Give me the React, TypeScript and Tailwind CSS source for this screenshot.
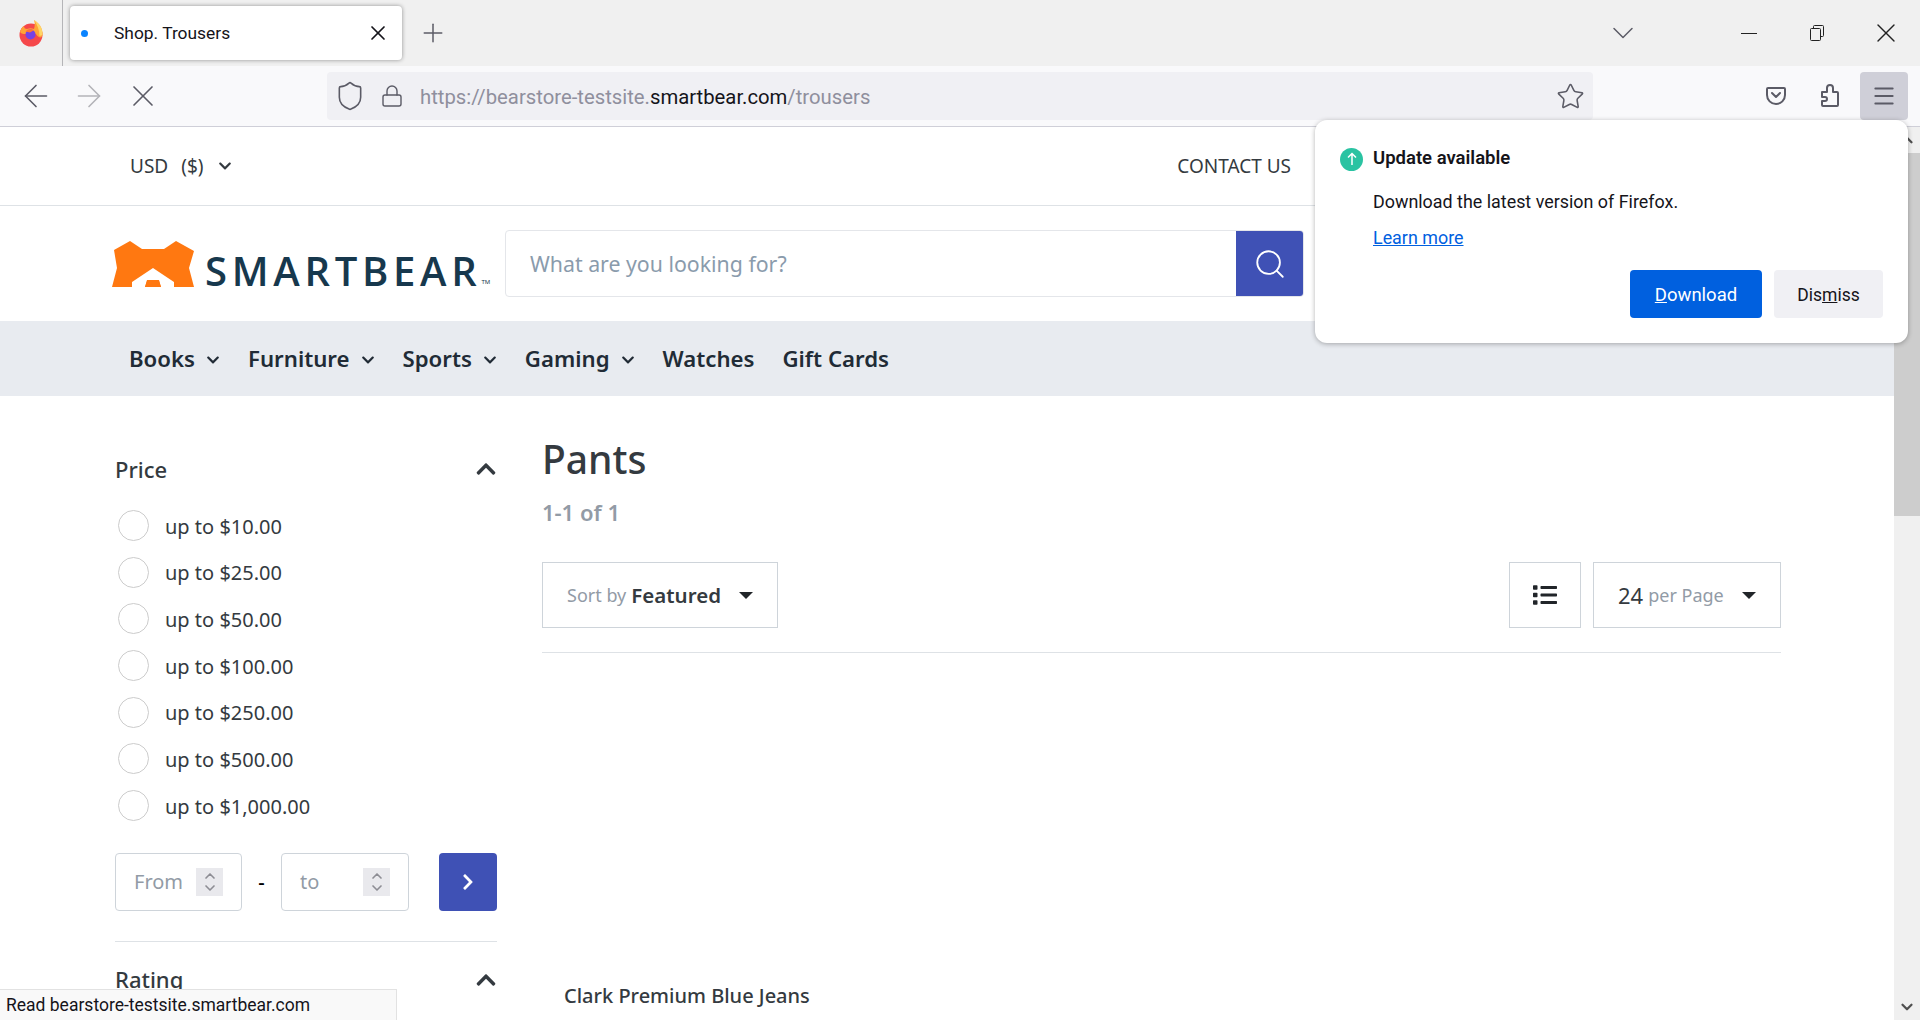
import { ChevronDown, ChevronUp, Search, X, Plus, ArrowLeft, ArrowRight, Shield, Lock, Star, Menu } from 'lucide-react'
import { FaChevronDown, FaChevronUp, FaChevronRight, FaList } from 'react-icons/fa'

const font = "font-['Noto_Sans','Open_Sans',sans-serif]"

const prices = ['up to $10.00', 'up to $25.00', 'up to $50.00', 'up to $100.00', 'up to $250.00', 'up to $500.00', 'up to $1,000.00']
const navItems = [
  { label: 'Books', caret: true },
  { label: 'Furniture', caret: true },
  { label: 'Sports', caret: true },
  { label: 'Gaming', caret: true },
  { label: 'Watches', caret: false },
  { label: 'Gift Cards', caret: false },
]

const FirefoxLogo = () => (
  <svg width="24" height="28" viewBox="0 0 24 28">
    <circle cx="12" cy="16" r="11.5" fill="#f5484b" />
    <path d="M1 13c1-3 2-5 4-6 0 2 1 3 3 3 2-1 5-1 7 0 1-3 1-6 0-9 5 3 9 8 8.500 15-.5 3-3 3-5 1-2-4-8-5-12-2-2 0-4 0-5.500-2z" fill="#ffa436" />
    <path d="M15 1c5 3 9 8 8.500 15l-3 1c0-6-2-11-5.500-16z" fill="#ffd567" />
    <circle cx="11.500" cy="15.500" r="5" fill="#7542e5" />
    <path d="M6.500 12.500c2-2.500 6-3 8-1l-3.500 2z" fill="#ff7139" />
  </svg>
)

const Pocket = () => (
  <svg width="22" height="22" viewBox="0 0 22 22" fill="none" stroke="#5b5b66" strokeWidth="2" strokeLinecap="round" strokeLinejoin="round">
    <path d="M3 3h16a1 1 0 0 1 1 1v6a9 9 0 0 1-18 0V4a1 1 0 0 1 1-1z" />
    <path d="M7 8l4 4 4-4" />
  </svg>
)

const Puzzle = () => (
  <svg width="20" height="24" viewBox="0 0 20 24" fill="none" stroke="#5b5b66" strokeWidth="2" strokeLinejoin="round">
    <path d="M2 8h5V4a3 3 0 0 1 6 0v4h4a1 1 0 0 1 1 1v12a1 1 0 0 1-1 1H3a1 1 0 0 1-1-1v-4h3a2 2 0 0 0 0-4H2z" />
  </svg>
)

const RestoreIcon = () => (
  <svg width="14" height="16" viewBox="0 0 14 16" fill="none" stroke="#222" strokeWidth="1">
    <rect x="0.500" y="3.500" width="10" height="12" rx="1" />
    <path d="M3.500 3.500V1.500a1 1 0 0 1 1-1h8a1 1 0 0 1 1 1v9a1 1 0 0 1-1 1h-2" />
  </svg>
)

const BearLogo = () => (
  <svg width="82" height="46" viewBox="0 0 82 46">
    <path d="M18 0l12 8h22l12-8 18 10-5 17 5 19H0l5-19-3-18z" fill="#ff7811" />
    <path d="M20 46v-5l21-14 21 14v5H49l-2-7H35l-2 7z" fill="#fff" />
    <path d="M33 46l2-6h12l2 6z" fill="#ff7811" />
  </svg>
)

const Caret = () => <div className="w-0 h-0 border-x-[7px] border-x-transparent border-t-[7px] border-t-[#212529]" />

const Stepper = () => (
  <div className="flex flex-col items-center justify-center w-[27px] h-[28px] bg-[#e9e9ed] text-[#8d8d94]">
    <ChevronUp size={16} strokeWidth={2.5} className="-mb-[2px]" />
    <ChevronDown size={16} strokeWidth={2.5} className="-mt-[2px]" />
  </div>
)

const BrowserChrome = () => (
  <>
    <div className="flex h-[66px] bg-[#f0f0f0] shrink-0">
      <div className="flex items-center justify-center w-[63px] h-full border-r border-[#b5b5b8]"><FirefoxLogo /></div>
      <div className="flex items-center ml-[7px] mt-[6px] w-[332px] h-[54px] bg-white rounded-[4px] shadow-[0_0_4px_rgba(0,0,0,0.4)]">
        <span className="w-[7px] h-[7px] ml-[11px] rounded-full bg-[#0a84ff]" />
        <span className="ml-[26px] mt-[1px] text-[17.4px] text-[#15141a] font-['Roboto',sans-serif]">Shop. Trousers</span>
        <X size={24} strokeWidth={1.7} className="ml-auto mr-[12px] text-[#15141a]" />
      </div>
      <div className="flex items-center ml-[16px] text-[#5b5b66] h-full"><Plus size={30} strokeWidth={1.2} /></div>
      <div className="flex items-center ml-auto h-full text-[#5b5b66]">
        <ChevronDown size={36} strokeWidth={1} className="mr-[100px]" />
        <div className="w-[16px] h-px bg-[#222] mr-[53px]" />
        <div className="mr-[46px]"><RestoreIcon /></div>
        <X size={32} strokeWidth={1} className="text-[#222] mr-[18px]" />
      </div>
    </div>
    <div className="flex items-center h-[61px] bg-[#f9f9fb] border-b border-[#cfcfd8] shrink-0 text-[#5b5b66]">
      <ArrowLeft size={36} strokeWidth={1.1} className="ml-[18px]" />
      <ArrowRight size={36} strokeWidth={1.1} className="ml-[17px] text-[#b4b4b9]" />
      <X size={36} strokeWidth={1.1} className="ml-[18px]" />
      <div className="flex items-center ml-[166px] w-[1266px] h-[48px] bg-[#f0f0f4] rounded-[4px]">
        <Shield size={32} strokeWidth={1.2} className="ml-[7px]" />
        <Lock size={24} strokeWidth={1.4} className="ml-[14px]" />
        <div className="ml-[16px] mt-[2px] text-[20.3px] font-['Roboto',sans-serif] text-[#8f8f9d]">
          https://bearstore-testsite.<span className="text-[#15141a]">smartbear.com</span>/trousers
        </div>
        <Star size={29} strokeWidth={1.3} className="ml-auto mr-[8px]" />
      </div>
      <div className="ml-[172px]"><Pocket /></div>
      <div className="ml-[33px]"><Puzzle /></div>
      <div className="flex items-center justify-center ml-[20px] w-[48px] h-[48px] rounded-[4px] bg-[#cfcfd8]"><Menu size={26} strokeWidth={1.8} /></div>
    </div>
  </>
)

const UpdatePopup = () => (
  <div className="absolute left-[1315px] top-[120px] w-[593px] h-[223px] bg-white rounded-[12px] shadow-[0_1px_5px_rgba(0,0,0,0.3)] pl-[25px] pt-[27px] pr-[25px] font-['Roboto',sans-serif] text-[#15141a]">
    <div className="flex items-center gap-[10px] h-[24px]">
      <div className="flex items-center justify-center w-[23px] h-[23px] rounded-full bg-[#2ac3a2]">
        <svg width="12" height="14" viewBox="0 0 12 14" fill="none" stroke="#fff" strokeWidth="1.5"><path d="M6 13V2M2 5.500L6 1.500l4 4" /></svg>
      </div>
      <span className="text-[18.5px] font-semibold">Update available</span>
    </div>
    <div className="mt-[19px] ml-[33px] text-[17.9px] leading-[24px]">Download the latest version of Firefox.</div>
    <div className="mt-[12px] ml-[33px] text-[17.9px] leading-[24px] text-[#0060df] underline">Learn more</div>
    <div className="flex justify-end gap-[12px] mt-[20px]">
      <div className="flex items-center justify-center w-[132px] h-[48px] pt-[3px] rounded-[4px] bg-[#0060df] text-white text-[18.5px]"><span><span className="underline">D</span>ownload</span></div>
      <div className="flex items-center justify-center w-[109px] h-[48px] pt-[3px] rounded-[4px] bg-[#f0f0f4] text-[17.5px]"><span>Dis<span className="underline">m</span>iss</span></div>
    </div>
  </div>
)

const Scrollbar = () => (
  <div className="flex flex-col items-center w-[26px] h-full bg-[#f0f0f0] shrink-0">
    <div className="flex items-center justify-center h-[26px] text-[#505050]"><ChevronUp size={18} strokeWidth={3} /></div>
    <div className="w-full h-[363px] bg-[#cdcdcd]" />
    <div className="flex items-center justify-center h-[26px] mt-auto text-[#505050]"><ChevronDown size={18} strokeWidth={3} /></div>
  </div>
)

const Header = () => (
  <header>
    <div className="flex items-center justify-between h-[79px] border-b border-[#dee2e6] pl-[130px] pr-[603px]">
      <div className="flex items-center text-[19px] text-[#343a40]">
        <span>USD</span><span className="ml-[13px]">($)</span>
        <FaChevronDown size={14} className="ml-[15px]" />
      </div>
      <span className="text-[19px] text-[#343a40]">CONTACT US</span>
    </div>
    <div className="flex items-center h-[115px] pl-[112px]">
      <BearLogo />
      <div className="flex items-end ml-[11px] w-[286px] pt-[14px]">
        <span className="text-[40px] leading-[46px] tracking-[4.7px] font-semibold text-[#17384d] font-['Open_Sans',sans-serif]">SMARTBEAR</span>
        <span className="text-[6px] leading-[8px] text-[#17384d] mb-[8px]">TM</span>
      </div>
      <div className="flex ml-[14px] w-[799px] h-[67px] border border-[#e4e6ea] rounded-[4px] overflow-hidden">
        <div className="flex-1 pl-[24px] flex items-center text-[21.3px] text-[#8a9bac]">What are you looking for?</div>
        <div className="flex items-center justify-center w-[67px] bg-[#3f51b5] text-white"><Search size={34} strokeWidth={1.3} /></div>
      </div>
    </div>
    <nav className="flex items-center h-[75px] bg-[#e8ebf0] pl-[129px] gap-[28px]">
      {navItems.map(item => (
        <div key={item.label} className="flex items-center text-[22.2px] font-semibold text-[#212b36]">
          {item.label}
          {item.caret && <FaChevronDown size={14} className="ml-[11px] mt-[3px]" />}
        </div>
      ))}
    </nav>
  </header>
)

const Sidebar = () => (
  <aside className="w-[382px] shrink-0 pt-[57px]">
    <div className="flex items-center justify-between h-[32px]">
      <span className="text-[22px] font-medium text-[#343a40]">Price</span>
      <FaChevronUp size={22} className="text-[#343a40]" />
    </div>
    <div className="flex flex-col gap-[15.7px] mt-[26px] ml-[3px]">
      {prices.map(p => (
        <div key={p} className="flex items-center h-[31px]">
          <div className="w-[31px] h-[31px] -mt-[2px] rounded-full border border-[#cccccc]" />
          <span className="ml-[16px] text-[20px] text-[#343a40]">{p}</span>
        </div>
      ))}
    </div>
    <div className="flex items-center mt-[31px]">
      <div className="flex items-center justify-between w-[127px] h-[58px] border border-[#ced4da] rounded-[4px] pl-[18px] pr-[18px]">
        <span className="text-[20px] text-[#929ba6]">From</span><Stepper />
      </div>
      <span className="w-[39px] text-center text-[20px] font-medium">-</span>
      <div className="flex items-center justify-between w-[128px] h-[58px] border border-[#ced4da] rounded-[4px] pl-[18px] pr-[18px]">
        <span className="text-[20px] text-[#929ba6]">to</span><Stepper />
      </div>
      <div className="flex items-center justify-center ml-auto w-[58px] h-[58px] bg-[#3f51b5] rounded-[4px] text-white"><FaChevronRight size={18} /></div>
    </div>
    <div className="border-t border-[#dee2e6] mt-[30px] pt-[21px] flex items-center justify-between">
      <span className="text-[22px] font-medium text-[#343a40]">Rating</span>
      <FaChevronUp size={22} className="text-[#343a40]" />
    </div>
  </aside>
)

const Content = () => (
  <main className="flex-1 ml-[45px] pt-[37px]">
    <h1 className="text-[39px] leading-[52px] font-medium text-[#343a40]">Pants</h1>
    <div className="mt-[12px] text-[22px] leading-[30px] font-semibold text-[#929ba6]">1-1 of 1</div>
    <div className="flex items-center mt-[35px] pb-[24px] border-b border-[#dee2e6]">
      <div className="flex items-center w-[236px] h-[66px] border border-[#ced4da] pl-[24px]">
        <span className="text-[18px] text-[#929ba6]">Sort by</span>
        <span className="ml-[5px] text-[20.5px] font-semibold text-[#343a40]">Featured</span>
        <div className="ml-[18px]"><Caret /></div>
      </div>
      <div className="flex items-center justify-center ml-auto w-[72px] h-[66px] border border-[#ced4da]"><FaList size={24} className="text-[#212529]" /></div>
      <div className="flex items-center ml-[12px] w-[188px] h-[66px] border border-[#ced4da] pl-[24px]">
        <span className="text-[22px] text-[#343a40]">24</span>
        <span className="ml-[5px] text-[18px] text-[#929ba6]">per Page</span>
        <div className="ml-[18px]"><Caret /></div>
      </div>
    </div>
    <div className="mt-[328px] ml-[22px] text-[20px] font-medium text-[#343a40]">Clark Premium Blue Jeans</div>
  </main>
)

const App = () => {
  return (
    <div className={`relative flex flex-col w-[1920px] h-[1020px] overflow-hidden bg-white ${font}`}>
      <BrowserChrome />
      <div className="flex flex-1 min-h-0">
        <div className="flex-1 min-w-0">
          <Header />
          <div className="flex pl-[115px] pr-[113px]">
            <Sidebar />
            <Content />
          </div>
        </div>
        <Scrollbar />
      </div>
      <UpdatePopup />
      <div className="absolute left-0 bottom-0 w-[397px] h-[31px] bg-[#f9f9f9] border-t border-r border-[#e2e2e2] flex items-center pl-[6px] text-[17.5px] text-[#15141a] font-['Roboto',sans-serif]">Read bearstore-testsite.smartbear.com</div>
    </div>
  )
}

export default App
